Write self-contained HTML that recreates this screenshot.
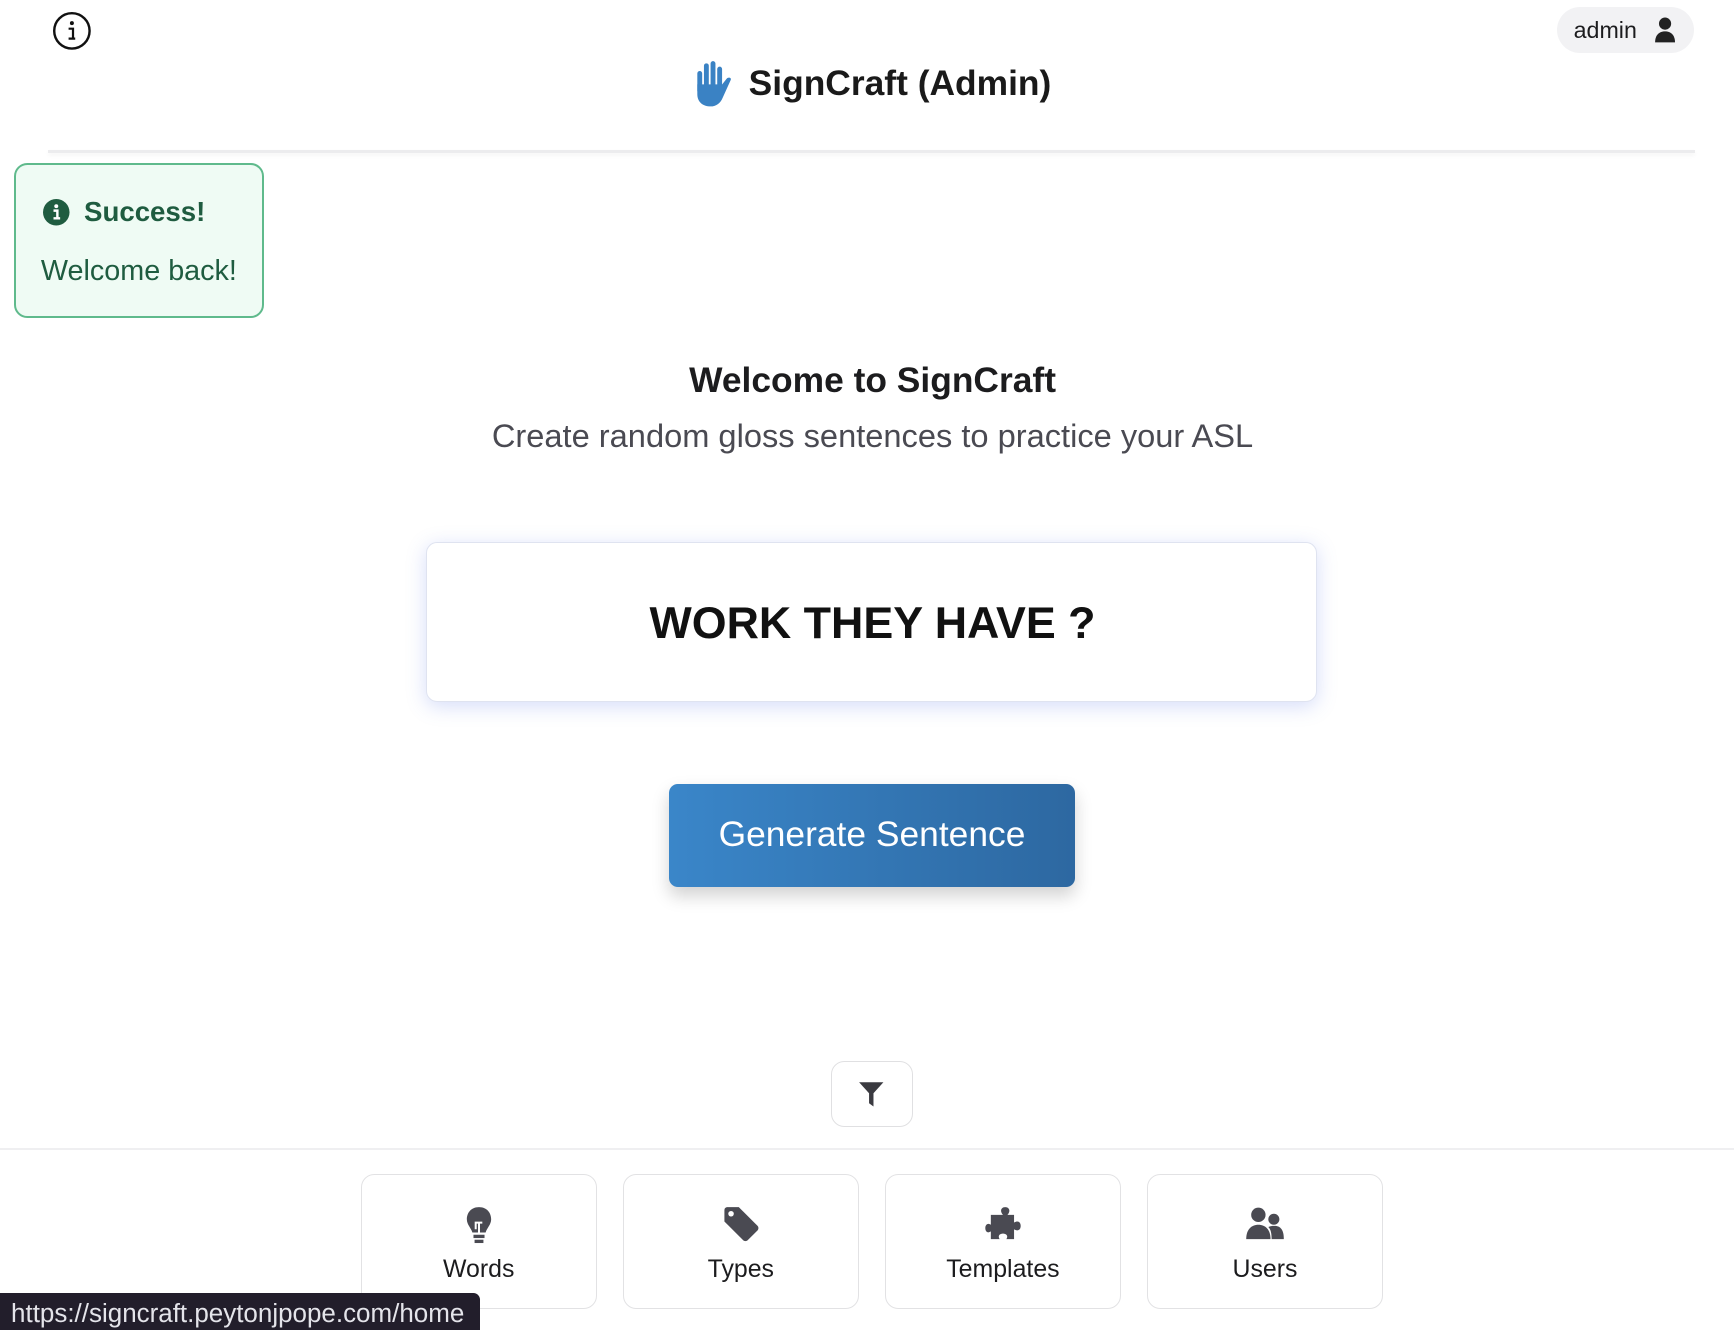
<!DOCTYPE html>
<html><head><meta charset="utf-8"><style>
html,body{margin:0;padding:0;background:#fff;overflow:hidden}
body{width:1568px;height:1203px;zoom:1.10587;position:relative;font-family:"Liberation Sans",sans-serif;color:#1c1c1e}
.abs{position:absolute}
.c{text-align:center;left:0;width:1578px}
.nav{position:absolute;top:1062px;width:212px;height:120px;border:1.5px solid #e2e2e4;border-radius:12px;background:#fff;text-align:center}
.nav svg{position:absolute;left:50%;top:28px;transform:translateX(-50%)}
.nav span{position:absolute;left:0;right:0;top:72px;font-size:22.5px;font-weight:500;color:#1c1c1e}
</style></head><body>
<svg class="abs" style="left:47px;top:10px" width="36" height="36" viewBox="0 0 36 36"><circle cx="18" cy="18" r="16" fill="none" stroke="#111" stroke-width="2.2"/><circle cx="18" cy="11" r="1.8" fill="#111"/><path d="M15 16h4v9M15 25h6" stroke="#111" stroke-width="2" fill="none"/></svg>
<div class="abs" style="left:1408px;top:6px;width:124px;height:42px;border-radius:21px;background:#f2f2f4"></div>
<div class="abs" style="left:1423px;top:15px;font-size:21px;color:#1c1c1e">admin</div>
<svg class="abs" style="left:1496px;top:15px" width="20" height="24" viewBox="0 0 20 24"><circle cx="10" cy="6" r="5.5" fill="#222"/><path d="M1 23c0-7 4-10 9-10s9 3 9 10z" fill="#222"/></svg>
<svg class="abs" style="left:628px;top:54px" width="36" height="43" viewBox="0 0 36 43" fill="#3a82c4"><rect x="3" y="10" width="4.4" height="20" rx="2.2"/><rect x="9" y="3" width="4.4" height="24" rx="2.2"/><rect x="15" y="1" width="4.4" height="26" rx="2.2"/><rect x="21" y="6" width="4.4" height="22" rx="2.2"/><path d="M3 22h22.5l4-5c1.5-2 5-1 3.5 1.5L26 34c-2 5-6 8-11 8-7 0-12-4-12-11z"/></svg>
<div class="abs" style="left:677px;top:58px;font-size:32px;font-weight:600;color:#1a1a1a">SignCraft (Admin)</div>
<div class="abs" style="left:43px;top:136px;width:1490px;height:2px;background:#ececee;box-shadow:0 2px 4px rgba(0,0,0,.05)"></div>
<div class="abs" style="left:13px;top:147px;width:222px;height:137px;border:2px solid #5fba8c;border-radius:12px;background:#effbf4"></div>
<svg class="abs" style="left:39px;top:180px" width="24" height="24" viewBox="0 0 24 24"><circle cx="12" cy="12" r="12" fill="#1f5c40"/><circle cx="12" cy="6.5" r="1.8" fill="#fff"/><path d="M9.5 10.5h3.5v7M9.5 17.5h6" stroke="#fff" stroke-width="2.2" fill="none"/></svg>
<div class="abs" style="left:76px;top:177px;font-size:25px;font-weight:700;color:#1f5c40">Success!</div>
<div class="abs" style="left:37px;top:231px;font-size:26px;color:#1f5c40">Welcome back!</div>
<div class="abs c" style="top:326px;font-size:32px;font-weight:700;color:#1c1c1e">Welcome to SignCraft</div>
<div class="abs c" style="top:377px;font-size:29.5px;color:#4a4a52">Create random gloss sentences to practice your ASL</div>
<div class="abs" style="left:385px;top:490px;width:804px;height:143px;border:1.5px solid #dfe3f0;border-radius:10px;background:#fff;box-shadow:0 4px 18px rgba(90,120,230,.25)"></div>
<div class="abs c" style="top:541px;font-size:40.5px;font-weight:700;color:#111">WORK THEY HAVE ?</div>
<div class="abs" style="left:605px;top:709px;width:367px;height:93px;border-radius:8px;background:linear-gradient(90deg,#3a86c9,#2d68a1);box-shadow:0 8px 16px rgba(0,0,0,.18);color:#fff;font-size:32px;text-align:center;line-height:93px">Generate Sentence</div>
<div class="abs" style="left:751px;top:959px;width:73px;height:58px;border:1.5px solid #e0e0e2;border-radius:12px"></div>
<svg class="abs" style="left:776px;top:977px" width="24" height="26" viewBox="0 0 24 26"><path d="M1 2h22l-9 10v12l-4-3v-9z" fill="#3a3a40"/></svg>
<div class="abs" style="left:0;top:1038px;width:1568px;height:2px;background:#efeff1"></div>
<div class="nav" style="left:326px"><svg width="28" height="36" viewBox="0 0 28 36"><path d="M14 1C7 1 3 6 3 12c0 5 4 8 5 12h12c1-4 5-7 5-12 0-6-4-11-11-11z" fill="#4a4a52"/><path d="M11 21v-6h6M14 15v9" stroke="#fff" stroke-width="1.8" fill="none"/><rect x="9" y="26" width="10" height="3" fill="#4a4a52"/><rect x="10" y="30.5" width="8" height="3" fill="#4a4a52"/></svg><span>Words</span></div>
<div class="nav" style="left:563px"><svg width="34" height="34" viewBox="0 0 34 34"><path d="M2 4c0-2 1-3 3-3h10l17 17c1 1 1 3 0 4l-9 9c-1 1-3 1-4 0L2 14z" fill="#4a4a52"/><circle cx="8" cy="7" r="2.5" fill="#fff"/></svg><span>Types</span></div>
<div class="nav" style="left:800px"><svg width="34" height="34" viewBox="0 0 34 34"><path d="M12 8h5c-3-3-2-7 2-7s5 4 2 7h6v7c3-2 6-1 6 3s-3 5-6 3v9h-7c2-3 0-5-3-5s-5 2-3 5H6v-7c-3 2-5 0-5-3s2-5 5-3V8z" fill="#4a4a52"/></svg><span>Templates</span></div>
<div class="nav" style="left:1037px"><svg width="36" height="34" viewBox="0 0 36 34"><circle cx="12" cy="8" r="6.5" fill="#4a4a52"/><path d="M1 30c0-9 5-13 11-13s11 4 11 13z" fill="#4a4a52"/><circle cx="26" cy="12" r="5" fill="#4a4a52"/><path d="M24 30c0-6-1-9-3-11 2-1 4-1 6-1 5 0 8 4 8 11v1z" fill="#4a4a52"/></svg><span>Users</span></div>
<div class="abs" style="left:0;top:1169px;width:434px;height:34px;background:#221e2b;border-top-right-radius:6px;color:#e4e4ea;font-size:23.5px;line-height:37px;padding-left:10px;box-sizing:border-box;white-space:nowrap;overflow:hidden">https://signcraft.peytonjpope.com/home</div>
</body></html>
